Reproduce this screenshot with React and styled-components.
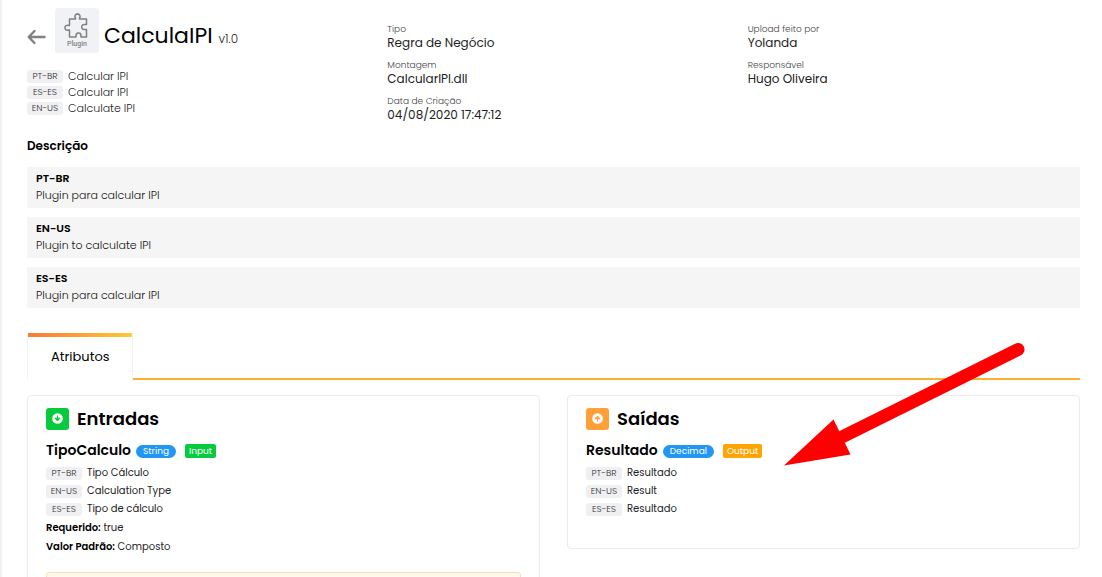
import React from "react";
import styled, { createGlobalStyle } from "styled-components";

const GlobalStyle = createGlobalStyle`
  *, *::before, *::after { box-sizing: border-box; }
  body {
    margin: 0;
    background: #fff;
    color: #000;
    font-family: Poppins, Inter, "Open Sans", sans-serif;
    font-size: 11px;
  }
  h1, h2, h3, h4, p, dl, dd, ul { margin: 0; padding: 0; }
  ul { list-style: none; }
`;

const Page = styled.main`
  position: relative;
  height: 100vh;
  overflow: hidden;
  border-left: 2px solid #f1f1f1;
  padding: 8px 22px 0 25px;
`;

const Header = styled.header`
  display: grid;
  grid-template-columns: repeat(3, minmax(0, 1fr));
  column-gap: 28px;
`;

const TitleRow = styled.div`
  display: flex;
  align-items: center;
  height: 45px;
  margin-bottom: 15px;
`;

const BackButton = styled.button`
  display: flex;
  width: 28px;
  margin-top: 12px;
  padding: 0;
  border: 0;
  background: none;
  cursor: pointer;
`;

const PluginLogo = styled.div`
  display: flex;
  width: 44px;
  height: 45px;
  flex-direction: column;
  align-items: center;
  padding-top: 5px;
  border-radius: 3px;
  background: #f1f2f6;
  color: #808080;
  font-family: Roboto, sans-serif;
  font-size: 7px;
  font-weight: 500;
  line-height: 10px;
`;

const Title = styled.h1`
  margin: 14px 0 0 5px;
  font-size: 22px;
  font-weight: 400;
  line-height: 32px;
  white-space: nowrap;
`;

const Version = styled.small`
  color: #222;
  font-size: 12px;
  font-weight: 300;
`;

const Translations = styled.ul`
  font-size: ${(p) => (p.$compact ? 10 : 11)}px;

  li {
    display: flex;
    align-items: center;
    gap: 5px;
    height: ${(p) => (p.$compact ? 18 : 16)}px;
    color: #222;
    font-weight: ${(p) => (p.$compact ? 400 : 300)};
  }
`;

const LangTag = styled.span`
  width: 36px;
  border-radius: 3px;
  background: #f0f0f2;
  color: #333;
  font-size: 9px;
  font-weight: 300;
  line-height: 13px;
  text-align: center;
`;

const Details = styled.dl`
  display: flex;
  flex-direction: column;
  gap: 8px;
  padding-top: 14px;
`;

const Label = styled.dt`
  color: #444;
  font-size: 9px;
  font-weight: 300;
  line-height: 14px;
`;

const Value = styled.dd`
  color: #222;
  font-size: 12px;
  line-height: 14px;
`;

const SectionTitle = styled.h2`
  margin: 15px 0 12px;
  font-size: 12px;
  font-weight: 600;
  line-height: 18px;
`;

const Descriptions = styled.div`
  display: flex;
  flex-direction: column;
  gap: 9px;
`;

const Description = styled.article`
  padding: 3px 9px 4px;
  background: #f5f5f5;
  line-height: 17px;

  h3 { font-size: 11px; font-weight: 600; }
  p { color: #111; font-weight: 300; }
`;

const Tabs = styled.div`
  display: flex;
  height: 47px;
  margin: 25px 0 15px;
  border-bottom: 2px solid #fbb034;
`;

const Tab = styled.button`
  height: 48px;
  padding: 4px 22px 5px 23px;
  border: 1px solid #f3f3f3;
  border-width: 0 1px;
  background: linear-gradient(90deg, #f8793b, #fdc934) top / 100% 4px no-repeat #fff;
  font: 400 13px/20px Poppins, Inter, sans-serif;
  cursor: pointer;
`;

const Cards = styled.div`
  display: grid;
  grid-template-columns: repeat(2, minmax(0, 1fr));
  align-items: start;
  gap: 27px;
`;

const Card = styled.section`
  min-height: 154px;
  padding: 10px 18px 18px;
  border: 1px solid #ebebeb;
  border-radius: 4px;
`;

const CardTitle = styled.h2`
  display: flex;
  align-items: center;
  gap: 8px;
  height: 25px;
  margin-bottom: 10px;
  font-size: 18px;
  font-weight: 600;
  line-height: 24px;
`;

const CardIcon = styled.span`
  display: grid;
  width: 23px;
  height: 22px;
  place-items: center;
  border-radius: 3px;
  background: ${(p) => p.$color};
`;

const Attribute = styled.h3`
  display: flex;
  align-items: center;
  height: 18px;
  margin-bottom: 5px;
  font-size: 14px;
  font-weight: 600;
`;

const Pill = styled.span`
  margin: 2px 9px 0 5px;
  padding: 0 7px;
  border-radius: 7px;
  background: #2196f3;
  color: #fff;
  font-size: 9px;
  font-weight: 400;
  line-height: 13px;
`;

const Badge = styled.span`
  margin-top: 2px;
  padding: 0 4px;
  border-radius: 2px;
  background: ${(p) => p.$color};
  color: #fff;
  font-size: 9px;
  font-weight: 400;
  line-height: 14px;
`;

const Fact = styled.p`
  color: #222;
  font-size: 10px;
  font-weight: 400;
  line-height: 19px;

  strong { color: #000; font-weight: 600; }
`;

const Notice = styled.div`
  height: 48px;
  margin-top: 16px;
  border: 1px solid #ffdcae;
  border-radius: 3px;
  background: #fff9ef;
`;

const Pointer = styled.svg`
  position: absolute;
  top: 340px;
  right: 72px;
  width: 246px;
  height: 128px;
  pointer-events: none;
`;

function CircleArrow({ up, color }) {
  return (
    <svg width="11" height="11" viewBox="0 0 11 11" aria-hidden="true">
      <circle cx="5.5" cy="5.5" r="5.3" fill="#fff" />
      <path
        d="M5.5 2.5V6M3 5.200H8L5.500 8z"
        transform={up ? "rotate(180 5.5 5.5)" : undefined}
        fill={color}
        stroke={color}
        strokeWidth="1"
      />
    </svg>
  );
}

function TranslationList({ items, compact }) {
  return (
    <Translations $compact={compact}>
      {items.map(([lang, text]) => (
        <li key={lang}>
          <LangTag>{lang}</LangTag>
          {text}
        </li>
      ))}
    </Translations>
  );
}

function DetailList({ items }) {
  return (
    <Details>
      {items.map(([label, value]) => (
        <div key={label}>
          <Label>{label}</Label>
          <Value>{value}</Value>
        </div>
      ))}
    </Details>
  );
}

const descriptions = [
  ["PT-BR", "Plugin para calcular IPI"],
  ["EN-US", "Plugin to calculate IPI"],
  ["ES-ES", "Plugin para calcular IPI"],
];

export default function App() {
  return (
    <>
      <GlobalStyle />
      <Page>
        <Header>
          <div>
            <TitleRow>
              <BackButton aria-label="Voltar">
                <svg width="19" height="16" viewBox="0 0 19 16" fill="none" stroke="#808080" strokeWidth="2.4" strokeLinecap="round" strokeLinejoin="round">
                  <path d="M7.500 2 1.700 8l5.800 6M2 8h15.500" />
                </svg>
              </BackButton>
              <PluginLogo>
                <svg width="26" height="26" viewBox="0 0 26 26" fill="none" stroke="#808080" strokeWidth="1.5" strokeLinejoin="round">
                  <path d="M5.500 6H11.500V5A2.500 2.500 0 1 1 15.500 5V6H22.500V11.500H21A2.600 2.600 0 1 0 21 16.500H22.500V24H17V22.500A2.500 2.500 0 1 0 12 22.500V24H5.500V17H4.500A2.500 2.500 0 1 1 4.500 12.500H5.500Z" />
                </svg>
                Plugin
              </PluginLogo>
              <Title>
                CalculaIPI <Version>v1.0</Version>
              </Title>
            </TitleRow>
            <TranslationList
              items={[
                ["PT-BR", "Calcular IPI"],
                ["ES-ES", "Calcular IPI"],
                ["EN-US", "Calculate IPI"],
              ]}
            />
          </div>
          <DetailList
            items={[
              ["Tipo", "Regra de Negócio"],
              ["Montagem", "CalcularIPI.dll"],
              ["Data de Criação", "04/08/2020 17:47:12"],
            ]}
          />
          <DetailList
            items={[
              ["Upload feito por", "Yolanda"],
              ["Responsável", "Hugo Oliveira"],
            ]}
          />
        </Header>

        <SectionTitle>Descrição</SectionTitle>
        <Descriptions>
          {descriptions.map(([lang, text]) => (
            <Description key={lang}>
              <h3>{lang}</h3>
              <p>{text}</p>
            </Description>
          ))}
        </Descriptions>

        <Tabs role="tablist">
          <Tab role="tab" aria-selected="true">Atributos</Tab>
        </Tabs>

        <Cards>
          <Card>
            <CardTitle>
              <CardIcon $color="#06cb3d">
                <CircleArrow color="#06cb3d" />
              </CardIcon>
              Entradas
            </CardTitle>
            <Attribute>
              TipoCalculo
              <Pill>String</Pill>
              <Badge $color="#06cb3d">Input</Badge>
            </Attribute>
            <TranslationList
              compact
              items={[
                ["PT-BR", "Tipo Cálculo"],
                ["EN-US", "Calculation Type"],
                ["ES-ES", "Tipo de cálculo"],
              ]}
            />
            <Fact><strong>Requerido:</strong> true</Fact>
            <Fact><strong>Valor Padrão:</strong> Composto</Fact>
            <Notice />
          </Card>
          <Card>
            <CardTitle>
              <CardIcon $color="#ff9f38">
                <CircleArrow up color="#ff9f38" />
              </CardIcon>
              Saídas
            </CardTitle>
            <Attribute>
              Resultado
              <Pill>Decimal</Pill>
              <Badge $color="#ffa502">Output</Badge>
            </Attribute>
            <TranslationList
              compact
              items={[
                ["PT-BR", "Resultado"],
                ["EN-US", "Result"],
                ["ES-ES", "Resultado"],
              ]}
            />
          </Card>
        </Cards>

        <Pointer viewBox="784 340 246 128" aria-hidden="true">
          <path d="M1018 349.500 842 437" stroke="#f00" strokeWidth="13" strokeLinecap="round" />
          <path d="M784 465.500 833.500 419.500 850.500 454.500z" fill="#f00" />
        </Pointer>
      </Page>
    </>
  );
}
